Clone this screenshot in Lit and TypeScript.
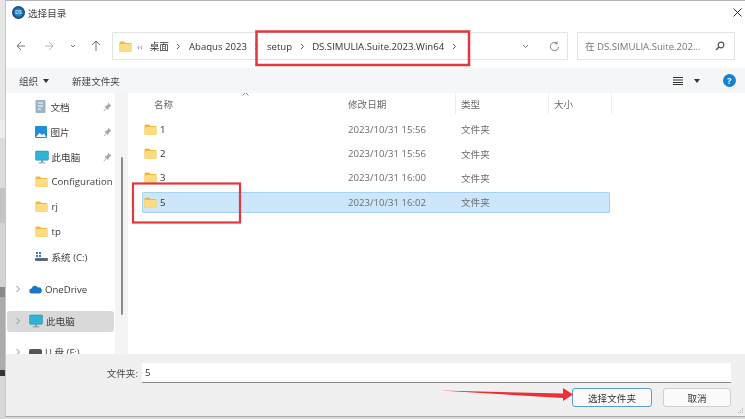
import { LitElement, html, css, svg } from "lit";
import { customElement } from "lit/decorators.js";

const folder = (w = 13) => html`<svg class="ic" width=${w} height=${Math.round(w * 0.85)} viewBox="0 0 26 22">
  <path d="M1 3.500Q1 1 3.500 1H10l3 3h10q2 0 2 2v14q0 1.500-2 1.500H3q-2 0-2-1.500z" fill="#f0b93c"/>
  <path d="M1 7.500Q1 6 3 6h20q2 0 2 1.500V19q0 2.500-2 2.500H3q-2 0-2-2.500z" fill="#fbdc83"/></svg>`;
const monitor = (w = 14) => html`<svg class="ic" width=${w} height=${w} viewBox="0 0 26 26">
  <rect x="1" y="2" width="24" height="17" rx="1.500" fill="#2fb4d6"/><rect x="1" y="2" width="24" height="17" rx="1.500" fill="none" stroke="#1d8aa8"/>
  <rect x="11" y="19" width="4" height="4" fill="#7e9aa6"/><rect x="7" y="23" width="12" height="1.800" fill="#7e9aa6"/></svg>`;
const pin = html`<svg class="pin" width="9" height="10" viewBox="0 0 18 20"><path d="M10 1l7 7-3 1-3 4-1 3-3-3-5 6-1-1 5-6-3-3 3-1 4-3z" fill="#a9a9a9"/></svg>`;
const chev = html`<svg class="chev" width="6" height="8" viewBox="0 0 6 8"><path d="M1.500 1l3 3-3 3" fill="none" stroke="#8d8d8d" stroke-width="1"/></svg>`;
const crumb = html`<svg class="crumb" width="5" height="7" viewBox="0 0 5 7"><path d="M1 1l2.500 2.500L1 6" fill="none" stroke="#555" stroke-width="1"/></svg>`;

@customElement("app-root")
export class AppRoot extends LitElement {
  static styles = css`
    :host { display: block; width: 745px; height: 419px; position: relative; overflow: hidden; background: #d8d8d8;
      font-family: "Open Sans", "Noto Sans CJK SC", sans-serif; font-size: 9.600px; color: #333; }
    * { box-sizing: border-box; }
    .ic { flex: none; display: block; }
    .page { display: flex; height: 419px; filter: blur(0.3px); }
    .edge { width: 5px; flex: none; display: flex; flex-direction: column; }
    .edge div:nth-child(1) { height: 120px; background: #e6e6e6; }
    .edge div:nth-child(2) { height: 18px; background: #eeeeee; }
    .edge div:nth-child(3) { height: 50px; background: #dcdcdc; }
    .edge div:nth-child(4) { height: 35px; background: #c4c4c4; }
    .edge div:nth-child(5) { height: 64px; background: #d4d4d4; }
    .edge div:nth-child(6) { height: 10px; background: #8a8a8a; }
    .edge div:nth-child(7) { height: 73px; background: #acacac; }
    .edge div:nth-child(8) { height: 6px; background: #353535; }
    .edge div:nth-child(9) { flex: 1; background: #d8d8d8; }
    .win { flex: 1; height: 417px; background: #fff; border-top: 1px solid #b5b5b5; border-left: 1px solid #c6c6c6; border-bottom: 1px solid #a8a8a8;
      display: flex; flex-direction: column; }
    .title { height: 23px; display: flex; align-items: center; padding-left: 6px; gap: 3px; flex: none; color: #444; }
    .logo { width: 13px; height: 13px; border-radius: 50%; background: radial-gradient(circle at 50% 50%, #2f86c9 0 30%, #123f70 70%); display: flex; align-items: center; justify-content: center; color: #dff; font-size: 5px; line-height: 1; }
    .spacer { flex: 1; }
    .close { margin-right: 3px; display: block; }
    .nav { height: 44px; flex: none; display: flex; align-items: center; padding: 0 10px; }
    .navbtns { width: 96px; flex: none; display: flex; align-items: center; }
    .navbtns svg { display: block; flex: none; }
    .addr { width: 456px; height: 28px; flex: none; border: 1px solid #e3e3e3; display: flex; align-items: center; padding-left: 6px; color: #333; border-radius: 1px; }
    .addr .t { margin-left: 5px; }
    .addr .t2 { margin-left: 7px; }
    .addr .crumb { margin: 0 7.500px; flex: none; }
    .addr .end { margin-left: auto; display: flex; align-items: center; gap: 20px; padding-right: 7px; }
    .search { width: 158px; height: 28px; flex: none; margin-left: 9px; border: 1px solid #e3e3e3; display: flex; align-items: center; justify-content: space-between; padding: 0 9px 0 7px; color: #777; white-space: nowrap; }
    .tools { height: 25px; flex: none; background: #f5f6f7; display: flex; align-items: center; padding: 0 9px 0 13px; color: #444; }
    .tools .org { display: flex; align-items: center; gap: 5px; width: 53px; }
    .tools .right { margin-left: auto; display: flex; align-items: center; gap: 5px; }
    .tri { width: 0; height: 0; border-left: 3px solid transparent; border-right: 3px solid transparent; border-top: 4px solid #333; }
    .help { width: 13px; height: 13px; border-radius: 50%; background: #1381d4; color: #fff; font-size: 9px; font-weight: 700; display: flex; align-items: center; justify-content: center; margin-left: 18px; line-height: 1; }
    .main { flex: 1; min-height: 0; display: flex; overflow: hidden; }
    .side { width: 109px; flex: none; overflow: hidden; padding: 1px 1px 0 1px; }
    .si { height: 25px; display: flex; align-items: center; white-space: nowrap; padding-left: 28px; gap: 3.500px; position: relative; color: #3c3c3c; }
    .si .pin { margin-left: auto; margin-right: 2px; }
    .si.tree { padding-left: 8px; gap: 3px; }
    .si.tree .chev { margin-right: 5px; flex: none; }
    .si.sel { background: #d9d9d9; border-radius: 3px; height: 21px; }
    .g1 { margin-top: 7.500px; }
    .g2 { margin-top: 9px; }
    .g3 { margin-top: 8px; }
    .track { width: 13px; flex: none; background: #f4f4f4; display: flex; justify-content: center; padding-top: 64px; }
    .thumb { width: 2px; height: 158px; background: #8b8b8b; border-radius: 1px; }
    .list { flex: 1; background: #fff; padding: 0 0 0 14px; }
    .head { height: 24px; display: grid; grid-template-columns: 201px 113px 93px 63px; color: #6a6a6a; padding-bottom: 3px; position: relative; }
    .head div { border-right: 1px solid #ececec; display: flex; align-items: center; padding-left: 5px; }
    .head div:first-child { padding-left: 12px; border-right: 0; }
    .sort { position: absolute; left: 100px; top: -1px; display: block; }
    .row { height: 24.400px; display: grid; grid-template-columns: 201px 113px 149px; align-items: center; color: #6d6d6d; width: 468px; border: 1px solid transparent; }
    .row .n { display: flex; align-items: center; gap: 3px; color: #333; padding-left: 1px; }
    .row.sel { background: #cce6fb; border-color: #a9d2ee; height: 20.500px; margin: 2px 0 1px; border-radius: 1px; }
    .row > div:nth-child(2) { padding-left: 4px; }
    .row > div:nth-child(3) { padding-left: 4px; }
    .foot { height: 62px; flex: none; background: #f0f0f0; padding: 9px 14px 0 0; display: flex; flex-direction: column; position: relative; }
    .frow { display: flex; align-items: center; justify-content: flex-end; gap: 4px; color: #444; }
    .input { width: 589px; height: 20px; background: #fff; border-bottom: 1px solid #8a8a8a; padding-left: 3px; display: flex; align-items: center; color: #333; }
    .btns { display: flex; justify-content: flex-end; gap: 11px; margin-top: 5px; }
    .btn { height: 19px; border-radius: 3px; border: 1px solid #d0d0d0; background: #fbfbfb; display: flex; align-items: center; justify-content: center; color: #333; }
    .btn.pri { width: 80px; border-color: #5c9fc4; }
    .btn.sec { width: 68px; }
    .grip { position: absolute; right: 1px; bottom: 1px; display: block; }
    .overlay { position: absolute; inset: 0; pointer-events: none; display: block; }
  `;

  render() {
    const nav = html`<svg width="96" height="14" viewBox="0 0 96 14">
      <path d="M1 7h8M1 7l4-4M1 7l4 4" fill="none" stroke="#7a7a7a" stroke-width="1"/>
      <path d="M10 7H2M10 7L6 3M10 7l-4 4" transform="translate(27 0)" fill="none" stroke="#b9b9b9" stroke-width="1"/>
      <path d="M55 6l2 2 2-2" fill="none" stroke="#777" stroke-width="1"/>
      <path d="M6 1v10M6 1L2 5M6 1l4 4" transform="translate(74 1)" fill="none" stroke="#777" stroke-width="1"/></svg>`;
    return html`
    <div class="page">
      <div class="edge"><div></div><div></div><div></div><div></div><div></div><div></div><div></div><div></div><div></div></div>
      <div class="win">
        <div class="title">
          <span class="logo">DS</span><span>选择目录</span><span class="spacer"></span>
          <svg class="close" width="9" height="9" viewBox="0 0 9 9"><path d="M.5.500l8 8M8.500.500l-8 8" stroke="#333" stroke-width="1"/></svg>
        </div>
        <div class="nav">
          <div class="navbtns">${nav}</div>
          <div class="addr">
            ${folder(13)}<span class="t" style="color:#888">‹‹</span><span class="t2">桌面</span>${crumb}<span>Abaqus 2023</span>${crumb}<span>setup</span>${crumb}<span>DS.SIMULIA.Suite.2023.Win64</span>${crumb}
            <span class="end">
              <svg width="7" height="5" viewBox="0 0 7 5"><path d="M1 1l2.500 2.500L6 1" fill="none" stroke="#777"/></svg>
              <svg width="11" height="11" viewBox="0 0 12 12"><path d="M10.500 6.500A4.500 4.500 0 1 1 8.500 2.300M8.800.500v2.600H6.200" fill="none" stroke="#777" stroke-width="1"/></svg>
            </span>
          </div>
          <div class="search"><span>在 DS.SIMULIA.Suite.202...</span>
            <svg width="10" height="10" viewBox="0 0 10 10"><circle cx="6" cy="4" r="2.800" fill="none" stroke="#555" stroke-width="1.200"/><path d="M4 6L1 9" stroke="#555" stroke-width="1.500"/></svg></div>
        </div>
        <div class="tools">
          <div class="org"><span>组织</span><span class="tri"></span></div><span>新建文件夹</span>
          <div class="right">
            <svg width="10" height="8" viewBox="0 0 10 8"><path d="M0 .500h10M0 3h10M0 5.500h10M0 7.500h10" stroke="#333" stroke-width="1"/></svg>
            <span class="tri" style="margin-left:6px"></span><span class="help">?</span>
          </div>
        </div>
        <div class="main">
          <div class="side">
            <div class="si"><svg class="ic" width="11" height="13" viewBox="0 0 11 13"><rect x=".5" width="10" height="13" rx="1" fill="#9fb3c6"/><path d="M3 3h5M3 6h5M3 9h3" stroke="#fff"/></svg><span style="margin-left:1px">文档</span>${pin}</div>
            <div class="si"><svg class="ic" width="12" height="12" viewBox="0 0 12 12"><rect width="12" height="12" rx="1" fill="#1f8fdc"/><path d="M1 11l3.500-4 2.500 2 2-1.500 2 3.500z" fill="#fff"/></svg>图片${pin}</div>
            <div class="si">${monitor(14)}<span style="margin-left:-1px">此电脑</span>${pin}</div>
            <div class="si">${folder(13)}Configuration</div>
            <div class="si">${folder(13)}rj</div>
            <div class="si">${folder(13)}tp</div>
            <div class="si"><svg class="ic" width="13" height="11" viewBox="0 0 13 11"><rect x="1" y="1" width="2" height="2" fill="#2b7fc0"/><rect x="4" y="1" width="2" height="2" fill="#2b7fc0"/><rect x="1" y="4" width="2" height="2" fill="#2b7fc0"/><rect x="4" y="4" width="2" height="2" fill="#2b7fc0"/><rect y="7" width="13" height="3" rx="1" fill="#5e6b76"/></svg>系统 (C:)</div>
            <div class="si tree g1">${chev}<svg class="ic" width="13" height="9" viewBox="0 0 26 18"><path d="M6 17a5 5 0 0 1-1-10 7 7 0 0 1 13-2 6 6 0 0 1 3 12z" fill="#1b78c9"/></svg>OneDrive</div>
            <div class="si tree sel g2">${chev}${monitor(14)}此电脑</div>
            <div class="si tree g3">${chev}<svg class="ic" width="13" height="10" viewBox="0 0 13 10"><rect y="2" width="13" height="7" rx="2" fill="#555"/></svg>U 盘 (F:)</div>
          </div>
          <div class="track"><div class="thumb"></div></div>
          <div class="list">
            <div class="head">
              <div>名称</div><div>修改日期</div><div>类型</div><div>大小</div>
              <svg class="sort" width="7" height="4" viewBox="0 0 7 4"><path d="M.5 3.500l3-3 3 3" fill="none" stroke="#8a8a8a"/></svg>
            </div>
            <div class="rows">
              ${[["1","2023/10/31 15:56"],["2","2023/10/31 15:56"],["3","2023/10/31 16:00"]].map(([n,d]) => html`
                <div class="row"><div class="n">${folder(13)}<span>${n}</span></div><div>${d}</div><div>文件夹</div></div>`)}
              <div class="row sel"><div class="n">${folder(13)}<span>5</span></div><div>2023/10/31 16:02</div><div>文件夹</div></div>
            </div>
          </div>
        </div>
        <div class="foot">
          <div class="frow"><span>文件夹:</span><div class="input">5</div></div>
          <div class="btns"><div class="btn pri">选择文件夹</div><div class="btn sec">取消</div></div>
          <svg class="grip" width="8" height="8" viewBox="0 0 8 8"><path d="M6 1h1v1H6zM4 3h1v1H4zM6 3h1v1H6zM2 5h1v1H2zM4 5h1v1H4zM6 5h1v1H6z" fill="#aaa"/></svg>
        </div>
      </div>
    </div>
    <svg class="overlay" width="745" height="419" viewBox="0 0 745 419">
      ${svg`<rect x="256.500" y="31.500" width="212.500" height="33.500" fill="none" stroke="#e0383d" stroke-width="2.500"/>
      <rect x="133" y="183.500" width="107" height="39" fill="none" stroke="#e0383d" stroke-width="2.200"/>
      <path d="M440 390.500L563 393.500 563 388 573 394.500 563 401 563 398z" fill="#ee2f35"/>`}
    </svg>`;
  }
}
